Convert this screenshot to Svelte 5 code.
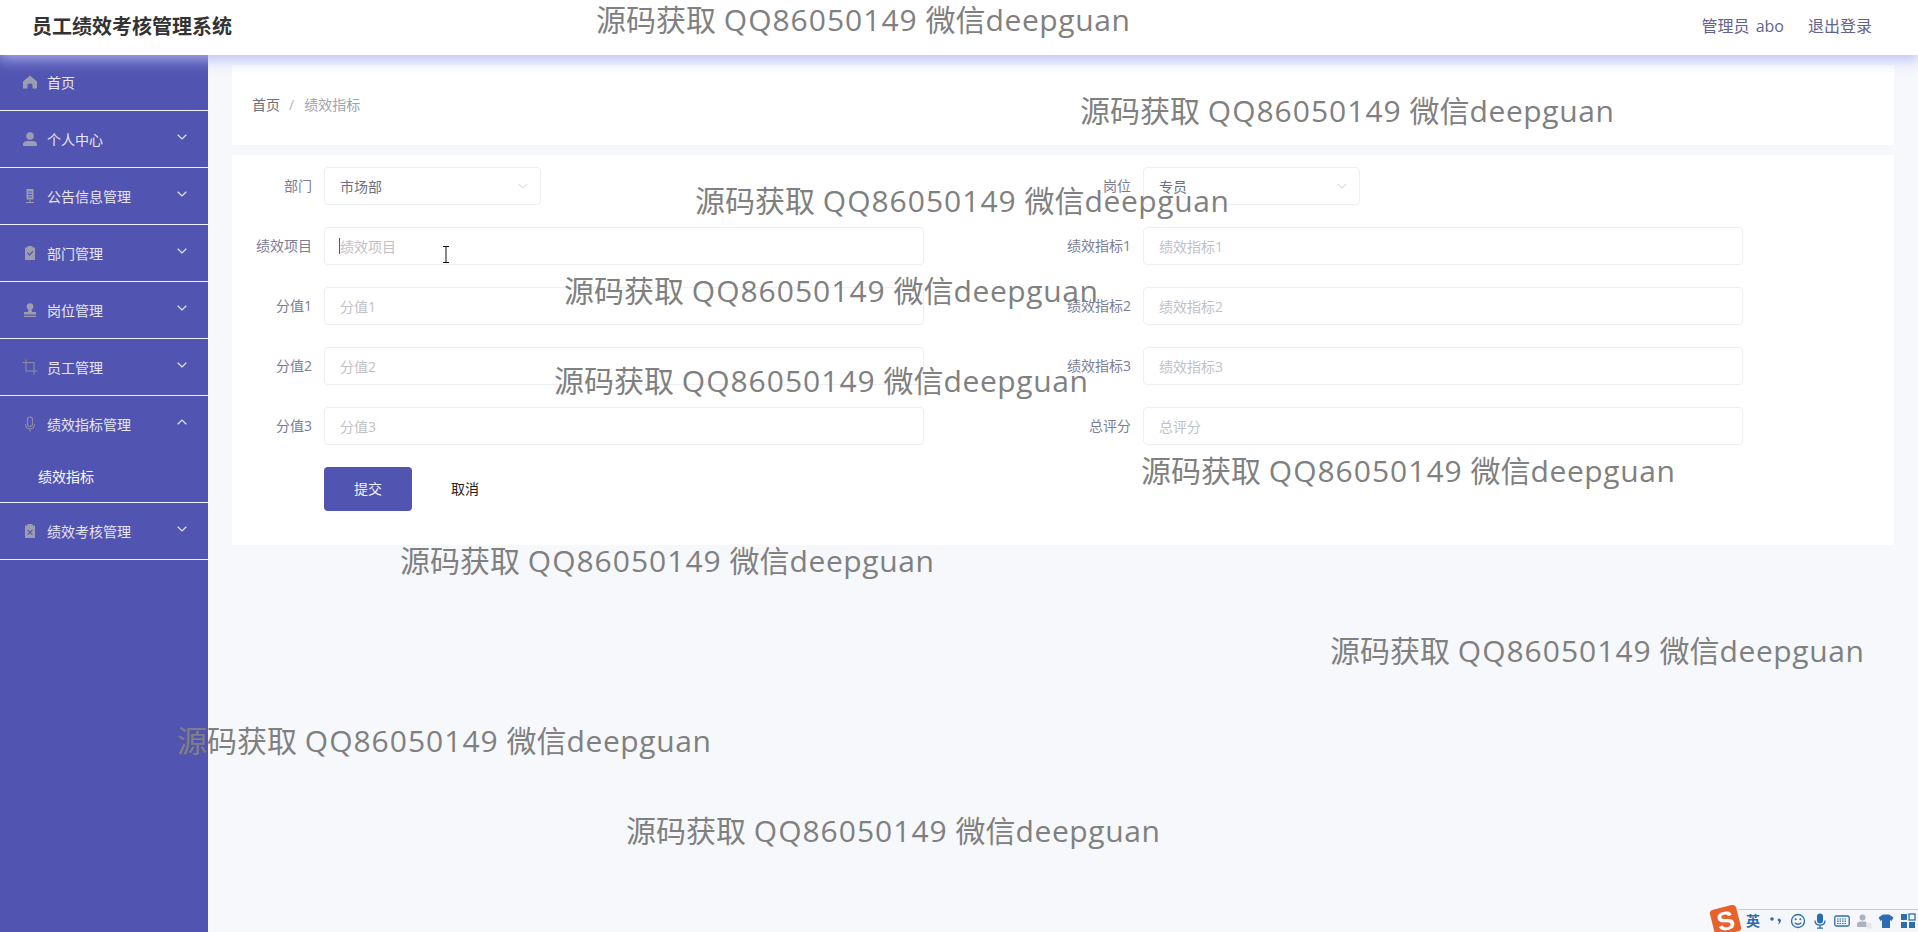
<script>
	const menu = [
		{ label: '首页', icon: 'home' },
		{ label: '个人中心', icon: 'user', arrow: 'down' },
		{ label: '公告信息管理', icon: 'note', arrow: 'down' },
		{ label: '部门管理', icon: 'check', arrow: 'down' },
		{ label: '岗位管理', icon: 'stamp', arrow: 'down' },
		{ label: '员工管理', icon: 'crop', arrow: 'down' },
		{ label: '绩效指标管理', icon: 'mic', arrow: 'up', children: ['绩效指标'] },
		{ label: '绩效考核管理', icon: 'cross', arrow: 'down' }
	];

	const leftFields = ['绩效项目', '分值1', '分值2', '分值3'];
	const rightFields = ['绩效指标1', '绩效指标2', '绩效指标3', '总评分'];

	// rows pair up: left column then right column
	const rows = leftFields.map((name, i) => [name, rightFields[i]]);

	const marks = [
		[596, -1], [1080, 90], [695, 180], [564, 270], [554, 360],
		[1141, 450], [400, 540], [1330, 630], [177, 720], [626, 810]
	];
</script>

<div class="page">
	<header class="top">
		<div class="title">员工绩效考核管理系统</div>
		<div class="top-right">
			<span>管理员 abo</span>
			<span>退出登录</span>
		</div>
	</header>

	<div class="body">
		<nav class="side">
			{#each menu as item}
				<div class="group">
					<div class="item">
						<svg class="icon" viewBox="0 0 16 16">
							{#if item.icon === 'home'}
								<path d="M8 1.500 15 7.500V14.500H10.500V10.500Q8 8.500 5.500 10.500V14.500H1V7.500Z" />
							{:else if item.icon === 'user'}
								<circle cx="8" cy="5" r="3.800" />
								<path d="M1 15V13.500Q1 10.500 4.500 10H11.500Q15 10.500 15 13.500V15Z" />
							{:else if item.icon === 'note'}
								<path fill-rule="evenodd" d="M4.500 1H11.500V11.500H4.500ZM6 3.500V4.500H10V3.500ZM6 6V7H10V6ZM6 8.500V9.500H10V8.500Z" />
								<path d="M7.500 11.500H8.500V14H12V15H4V14H7.500Z" />
							{:else if item.icon === 'check'}
								<path fill-rule="evenodd" d="M3 2.500H5.500V1H10.500V2.500H13V15H3ZM5 8 7.500 11 11.500 6.500 10.500 5.800 7.500 9.200 6 7.200Z" />
							{:else if item.icon === 'stamp'}
								<circle cx="8" cy="4.500" r="3.300" />
								<path d="M6.500 7H9.500L10 10H14V12.500H2V10H6ZM2 13.800H14V15H2Z" />
							{:else if item.icon === 'crop'}
								<path class="line" d="M4 .5V12H15.500M.5 3.500H12V15.500" />
							{:else if item.icon === 'mic'}
								<rect class="line" x="5.500" y="1" width="5" height="9.500" rx="2.500" />
								<path class="line" d="M3.500 8Q3.500 12.800 8 12.800T12.500 8M8 12.800V15.500" />
							{:else}
								<path fill-rule="evenodd" d="M3 2.500H5.500V1H10.500V2.500H13V15H3ZM6 6.500 5.200 7.300 7.200 9.300 5.200 11.300 6 12.100 8 10.100 10 12.100 10.800 11.300 8.800 9.300 10.800 7.300 10 6.500 8 8.500Z" />
							{/if}
						</svg>
						<span>{item.label}</span>
						{#if item.arrow}
							<svg class="arrow" class:up={item.arrow === 'up'} viewBox="0 0 10 6">
								<path d="M.7.8 5 5 9.300.8" />
							</svg>
						{/if}
					</div>
					{#if item.children}
						{#each item.children as child}
							<div class="sub">{child}</div>
						{/each}
					{/if}
				</div>
			{/each}
		</nav>

		<main class="main">
			<section class="crumb">
				<span class="crumb-home">首页</span>
				<span class="crumb-sep">/</span>
				<span class="crumb-now">绩效指标</span>
			</section>

			<section class="form">
				<div class="row">
					<label class="field">
						<span class="lab">部门</span>
						<div class="select">
							<span>市场部</span>
							<svg class="sel-arrow" viewBox="0 0 10 6"><path d="M.7.8 5 5 9.300.8" /></svg>
						</div>
					</label>
					<label class="field">
						<span class="lab">岗位</span>
						<div class="select">
							<span>专员</span>
							<svg class="sel-arrow" viewBox="0 0 10 6"><path d="M.7.8 5 5 9.300.8" /></svg>
						</div>
					</label>
				</div>

				{#each rows as pair, i}
					<div class="row">
						{#each pair as name, j}
							<label class="field">
								<span class="lab">{name}</span>
								<span class="input-wrap">
									<input placeholder={name} />
									{#if i === 0 && j === 0}
										<i class="caret"></i>
										<svg class="ibeam" viewBox="0 0 8 17">
											<path d="M1 .5H7M4 .5V16.500M1 16.500H7" />
										</svg>
									{/if}
								</span>
							</label>
						{/each}
					</div>
				{/each}

				<div class="actions">
					<button class="submit">提交</button>
					<button class="cancel">取消</button>
				</div>
			</section>
		</main>
	</div>

	<!-- repeated watermark laid over the whole page -->
	{#each marks as [x, y]}
		<div class="mark" style="left: {x}px; top: {y}px">源码获取 <span class="mark-num">QQ86050149</span> 微信<span class="mark-name">deepguan</span></div>
	{/each}

	<div class="ime">
		<div class="ime-logo"><span>S</span></div>
		<div class="ime-bar">
			<span class="ime-en">英</span>
			<svg viewBox="0 0 16 16"><circle cx="4" cy="6" r="1.800" /><path d="M11 5.500Q13.500 6 12.800 8.500 12.200 10.800 9.800 11.500 11.200 9.800 11 8.500 9.500 8 9.800 6.500 10 5.500 11 5.500Z" /></svg>
			<svg viewBox="0 0 16 16"><circle class="ime-line" cx="8" cy="8" r="6.500" /><circle cx="5.700" cy="6.300" r="1" /><circle cx="10.300" cy="6.300" r="1" /><path class="ime-line" d="M4.800 9.800Q8 12.600 11.200 9.800" /></svg>
			<svg viewBox="0 0 16 16"><rect x="5" y=".5" width="6" height="10" rx="3" /><path class="ime-line" d="M3 7.500Q3 12.200 8 12.200T13 7.500M8 12.200V15M5 15.200H11" /></svg>
			<svg viewBox="0 0 16 16"><rect class="ime-line" x=".8" y="3" width="14.400" height="10" rx="1.500" /><path class="ime-dots" d="M3 6H13M3 8.200H13M3 10.500H13" /></svg>
			<svg class="ime-grey" viewBox="0 0 16 16"><circle cx="6.500" cy="4.500" r="3" /><path d="M1 14V11.500Q1 8.500 4.500 8.500H8.500Q10 8.500 10.500 9.500V14Z" /><rect x="10.500" y="10" width="5" height="5.500" fill="#e4e6ea" /></svg>
			<svg viewBox="0 0 16 16"><path d="M5 1.500H11L15.500 4.500 13.500 8 12 7V15H4V7L2.500 8 .5 4.500Z" /></svg>
			<svg viewBox="0 0 16 16"><rect x="1" y="1" width="6" height="6" /><rect x="9" y="1" width="6" height="6" class="ime-line" /><rect x="1" y="9" width="6" height="6" /><rect x="9" y="9" width="6" height="6" /></svg>
		</div>
	</div>
</div>

<style>
	:global(body) {
		margin: 0;
		background: #f6f8fb;
		font-family: "Open Sans", "Noto Sans CJK SC", sans-serif;
	}

	.page {
		position: relative;
		width: 1918px;
		height: 932px;
		overflow: hidden;
		display: flex;
		flex-direction: column;
	}

	.top {
		position: relative;
		z-index: 2;
		flex: none;
		height: 55px;
		box-sizing: border-box;
		background: #fff;
		display: flex;
		align-items: center;
		justify-content: space-between;
		padding: 0 46px 4px 32px;
		box-shadow: 0 2px 14px 2px rgba(178, 184, 244, 0.95);
	}

	.title {
		font-size: 20px;
		font-weight: 700;
		color: #333;
	}

	.top-right {
		display: flex;
		gap: 24px;
		margin-bottom: 2px;
		font-size: 16px;
		color: #62628f;
	}

	.top-right span:first-child {
		word-spacing: 2px;
	}

	.body {
		flex: 1;
		display: flex;
		min-height: 0;
	}

	.side {
		flex: none;
		width: 208px;
		background: #5254b1;
	}

	.group {
		border-bottom: 1px solid #f0f0f8;
	}

	.item {
		height: 56px;
		display: flex;
		align-items: center;
		padding-left: 22px;
		font-size: 14px;
		color: #e6e6f4;
	}

	.group:first-child .item {
		height: 54px;
		padding-bottom: 1px;
	}

	.icon {
		width: 16px;
		height: 16px;
		margin-right: 9px;
		fill: #9d9db0;
	}

	.icon .line {
		fill: none;
		stroke: #8b8ba8;
		stroke-width: 1.100;
	}

	.arrow {
		width: 10px;
		height: 6px;
		margin-left: auto;
		margin-right: 21px;
		margin-top: -4px;
		fill: none;
		stroke: #e6e6f4;
		stroke-width: 1.200;
	}

	.arrow.up {
		transform: rotate(180deg);
	}

	.sub {
		height: 47px;
		padding-bottom: 3px;
		display: flex;
		align-items: center;
		padding-left: 38px;
		font-size: 14px;
		color: #fff;
	}

	.main {
		flex: 1;
		min-width: 0;
		padding: 10px 24px 0;
	}

	.crumb {
		height: 78px;
		padding-bottom: 2px;
		background: #fff;
		display: flex;
		align-items: center;
		padding-left: 20px;
		font-size: 14px;
		gap: 9px;
	}

	.crumb-home {
		color: #707078;
	}

	.crumb-sep {
		color: #b4b4bc;
	}

	.crumb-now {
		color: #a0a3ae;
		margin-left: 1px;
	}

	.form {
		margin-top: 10px;
		height: 390px;
		box-sizing: border-box;
		background: #fff;
		padding-top: 12px;
		display: flex;
		flex-direction: column;
		gap: 22px;
	}

	.row {
		display: grid;
		grid-template-columns: 819px 1fr;
	}

	.field {
		display: flex;
		align-items: center;
		height: 38px;
	}

	.lab {
		flex: none;
		width: 80px;
		margin-right: 12px;
		padding-bottom: 2px;
		text-align: right;
		font-size: 14px;
		color: #7b7d95;
	}

	.select {
		width: 217px;
		height: 38px;
		box-sizing: border-box;
		border: 1px solid #eeeff3;
		border-radius: 4px;
		display: flex;
		align-items: center;
		justify-content: space-between;
		padding: 0 12px 1px 15px;
		font-size: 14px;
		color: #6c7080;
	}

	.sel-arrow {
		width: 10px;
		height: 6px;
		fill: none;
		stroke: #dcdfe6;
		stroke-width: 1.100;
	}

	.input-wrap {
		position: relative;
		display: block;
		width: 600px;
	}

	input {
		display: block;
		width: 100%;
		height: 38px;
		box-sizing: border-box;
		border: 1px solid #eeeff3;
		border-radius: 4px;
		padding: 0 15px;
		outline: none;
		font: inherit;
		font-size: 14px;
		background: #fff;
	}

	input::placeholder {
		color: #bfc1c9;
		opacity: 1;
	}

	.caret {
		position: absolute;
		left: 15px;
		top: 11px;
		width: 1px;
		height: 16px;
		background: #55556a;
	}

	.ibeam {
		position: absolute;
		left: 118px;
		top: 19px;
		width: 8px;
		height: 17px;
		fill: none;
		stroke: #111;
		stroke-width: 1;
	}

	.actions {
		display: flex;
		align-items: center;
		padding-left: 92px;
	}

	button {
		font: inherit;
		font-size: 14px;
		border: none;
		padding: 0 0 2px;
		cursor: pointer;
	}

	.submit {
		width: 88px;
		height: 44px;
		border-radius: 4px;
		background: #5254b1;
		color: #f2f2fa;
	}

	.cancel {
		width: 88px;
		height: 44px;
		margin-left: 9px;
		background: #fff;
		color: #222;
	}

	.mark {
		position: absolute;
		z-index: 3;
		white-space: nowrap;
		font-size: 30px;
		line-height: 42px;
		color: #808080;
		pointer-events: none;
	}

	.mark-num {
		letter-spacing: 1px;
	}

	.mark-name {
		letter-spacing: 0.6px;
	}

	.ime {
		position: absolute;
		z-index: 4;
		right: 0;
		bottom: 0;
		width: 207px;
		height: 26px;
		display: flex;
		justify-content: flex-end;
	}

	.ime-logo {
		position: absolute;
		left: 1px;
		top: 1px;
		width: 27px;
		height: 27px;
		border-radius: 4px;
		background: #e7622d;
		transform: rotate(-14deg);
		display: flex;
		align-items: center;
		justify-content: center;
		color: #fff;
		font: 900 26px/1 "Liberation Sans", sans-serif;
	}

	.ime-bar {
		width: 180px;
		height: 23px;
		margin-top: 3px;
		box-sizing: border-box;
		border-top: 1px solid #c9ccd2;
		background: #f4f6f9;
		display: flex;
		align-items: center;
		gap: 6px;
		padding-left: 8px;
	}

	.ime-en {
		font-size: 14px;
		font-weight: 700;
		color: #2a6db0;
		width: 16px;
		line-height: 1;
	}

	.ime-bar svg {
		width: 16px;
		height: 16px;
		flex: none;
		fill: #2a6db0;
	}

	.ime-bar .ime-line {
		fill: none;
		stroke: #2a6db0;
		stroke-width: 1.300;
	}

	.ime-bar .ime-dots {
		fill: none;
		stroke: #2a6db0;
		stroke-width: 1.200;
		stroke-dasharray: 1.500 1;
	}

	.ime-bar .ime-grey {
		fill: #aab2bd;
	}
</style>
